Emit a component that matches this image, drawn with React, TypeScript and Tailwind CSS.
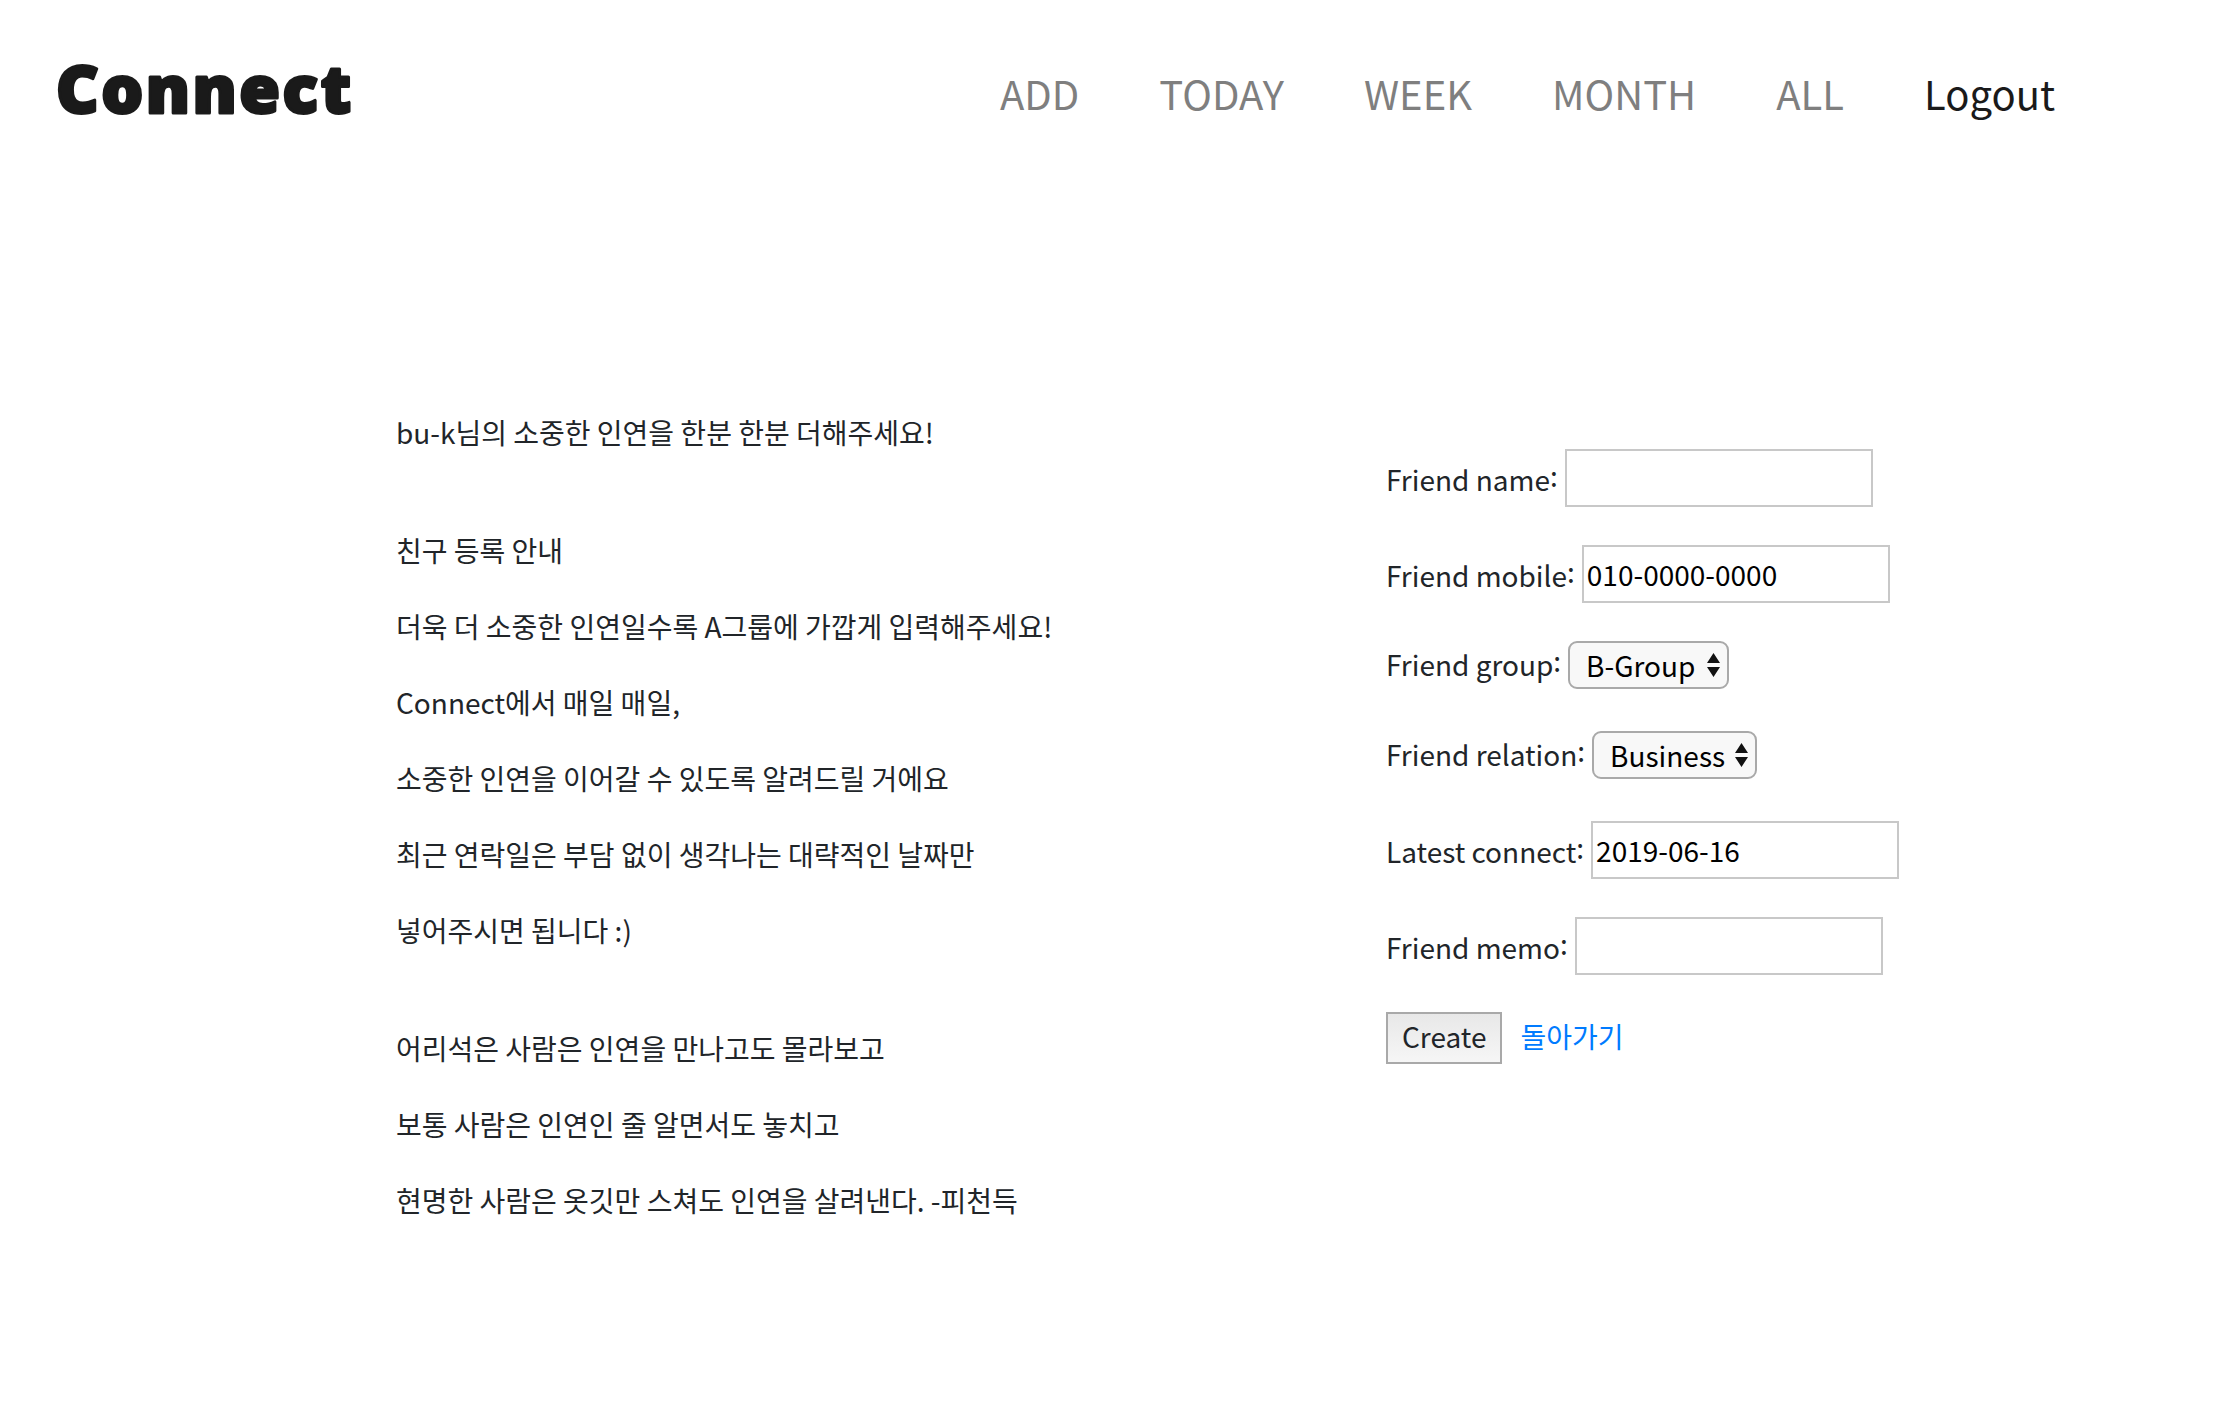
const navItems = ["ADD", "TODAY", "WEEK", "MONTH", "ALL"]

const intro = [
  "친구 등록 안내",
  "더욱 더 소중한 인연일수록 A그룹에 가깝게 입력해주세요!",
  "Connect에서 매일 매일,",
  "소중한 인연을 이어갈 수 있도록 알려드릴 거에요",
  "최근 연락일은 부담 없이 생각나는 대략적인 날짜만",
  "넣어주시면 됩니다 :)",
]

const quote = [
  "어리석은 사람은 인연을 만나고도 몰라보고",
  "보통 사람은 인연인 줄 알면서도 놓치고",
  "현명한 사람은 옷깃만 스쳐도 인연을 살려낸다. -피천득",
]

function FieldLabel({ text, lift = "pb-[3px]" }: { text: string; lift?: string }) {
  return (
    <label className={`mr-[7px] whitespace-nowrap ${lift}`}>
      {text}
      <span className="align-[0.14em]">:</span>
    </label>
  )
}

function TextField({ label, value = "", last = false }: { label: string; value?: string; last?: boolean }) {
  return (
    <div className={`flex items-center h-[58px] ${last ? "mb-[37px]" : "mb-[38px]"}`}>
      <FieldLabel text={label} />
      <input
        readOnly
        value={value}
        className="w-[308px] h-[58px] border-2 border-[#c8c8c8] px-[3px] text-black outline-none"
      />
    </div>
  )
}

function SelectField({ label, value, width }: { label: string; value: string; width: string }) {
  return (
    <div className="flex items-center h-[48px] mb-[42px]">
      <FieldLabel text={label} lift="pb-[6px]" />
      <div className={`flex items-center justify-between h-[48px] pl-[16px] pr-[7px] border-2 border-[#a9a9a9] rounded-[9px] bg-[#f8f8f8] text-black ${width}`}>
        <span>{value}</span>
        <svg width="13" height="24" viewBox="0 0 13 24" className="fill-[#111]">
          <path d="M6.5 0 L13 10 H0 Z M0 14 H13 L6.5 24 Z" />
        </svg>
      </div>
    </div>
  )
}

export default function App() {
  return (
    <div className="w-[2214px] h-[1416px] bg-white text-[#212529] text-[28px] leading-[1.5] font-['Noto_Sans_CJK_KR',sans-serif] overflow-hidden">
      <header className="flex items-start justify-between pl-[55px] pr-[159px] pt-[40px]">
        <svg width="310" height="100" viewBox="0 0 310 100">
          <text
            x="1"
            y="73"
            textLength="295"
            className="fill-[#1a1a1a] stroke-[#1a1a1a] font-['Noto_Sans',sans-serif] font-black text-[66px]"
            strokeWidth="3"
            strokeLinejoin="round"
          >
            Connect
          </text>
        </svg>
        <nav className="flex gap-[80px] text-[40px] leading-[60px] pt-[23px]">
          {navItems.map((item) => (
            <a key={item} className="text-[#7f7f7f]">{item}</a>
          ))}
          <a className="text-[#1a1a1a]">Logout</a>
        </nav>
      </header>

      <main className="flex pl-[396px] pt-[271px]">
        <section className="w-[990px]">
          <p className="mb-[76px] leading-[42px]">bu-k님의 소중한 인연을 한분 한분 더해주세요!</p>
          {intro.map((line) => (
            <p key={line} className="mb-[34px] leading-[42px]">{line}</p>
          ))}
          <div className="h-[42px]" />
          {quote.map((line) => (
            <p key={line} className="mb-[34px] leading-[42px]">{line}</p>
          ))}
        </section>
        <form className="pt-[38px]">
          <TextField label="Friend name" />
          <TextField label="Friend mobile" value="010-0000-0000" />
          <SelectField label="Friend group" value="B-Group" width="w-[161px]" />
          <SelectField label="Friend relation" value="Business" width="w-[165px]" />
          <TextField label="Latest connect" value="2019-06-16" />
          <TextField label="Friend memo" last />
          <div className="flex items-center gap-[18px]">
            <button type="button" className="h-[52px] px-[14px] pb-[4px] border-2 border-[#a9a9a9] bg-gradient-to-b from-[#e8e8e8] to-[#f6f6f6]">Create</button>
            <a className="pb-[5px] text-[#007bff]">돌아가기</a>
          </div>
        </form>
      </main>
    </div>
  )
}
